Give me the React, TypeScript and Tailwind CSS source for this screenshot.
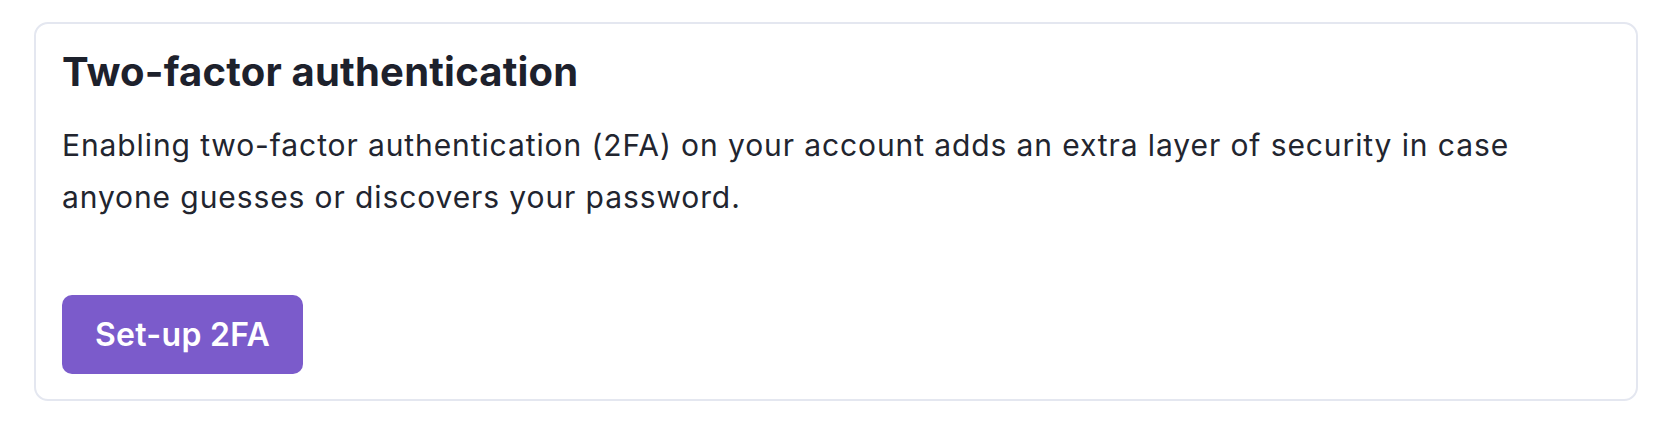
import React from 'react';

const App: React.FC = () => {
  return (
    <div className="min-h-screen bg-white pl-[34px] pr-[36px] pt-[22px] font-['Inter',sans-serif] antialiased">
      <section className="flex h-[379px] flex-col rounded-[14px] border-2 border-[#e4e7f0] bg-white px-[26px] pt-[20px]">
        <h2 className="text-[40px] font-bold leading-[56px] tracking-[0.2px] text-[#1d212c]">Two-factor authentication</h2>
        <p className="mt-[19px] max-w-[1500px] text-[30px] leading-[52px] tracking-[0.9px] text-[#22252f]">
          Enabling two-factor authentication (2FA) on your account adds an extra layer of security in case
          anyone guesses or discovers your password.
        </p>
        <div className="mt-[72px]">
          <button
            type="button"
            className="h-[79px] rounded-[10px] bg-[#7b5bcb] px-[33px] text-[32px] font-semibold tracking-[0.3px] text-white"
          >
            Set-up 2FA
          </button>
        </div>
      </section>
    </div>
  );
};

export default App;
